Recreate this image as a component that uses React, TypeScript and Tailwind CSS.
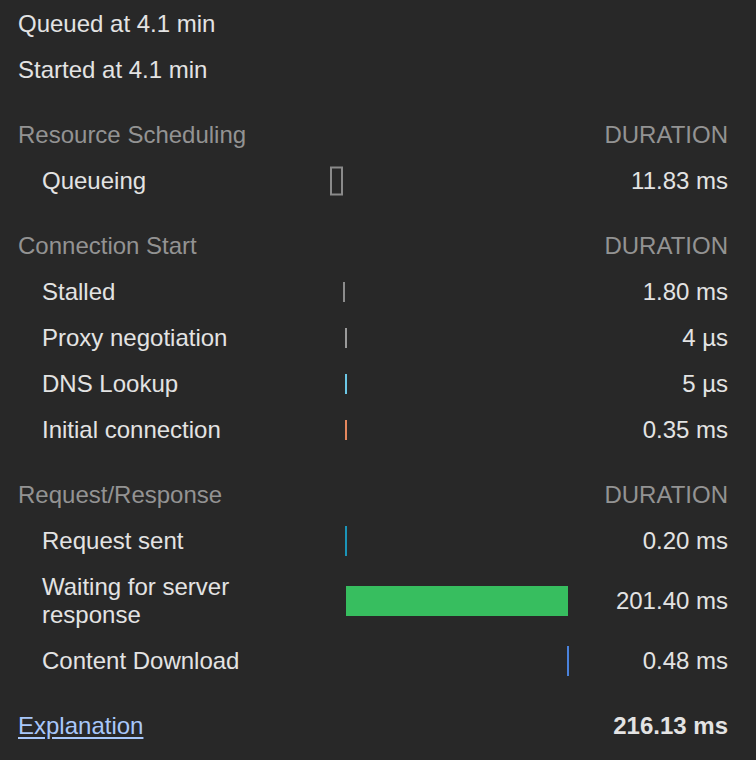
import React from "react";

type Phase = {
    name: string;
    start: number;
    duration: number;
    value: string;
    kind: "box" | "line" | "bar";
    color: string;
    tall?: boolean;
};

type Section = {
    title: string;
    phases: Phase[];
};

// px per ms on the timeline
const SCALE = 1.1;

const sections: Section[] = [
    {
        title: "Resource Scheduling",
        phases: [
            { name: "Queueing", start: 0, duration: 11.83, value: "11.83 ms", kind: "box", color: "border-[#8a8a8a]" },
        ],
    },
    {
        title: "Connection Start",
        phases: [
            { name: "Stalled", start: 11.83, duration: 1.8, value: "1.80 ms", kind: "line", color: "bg-[#8c8c8c]" },
            { name: "Proxy negotiation", start: 13.63, duration: 0.004, value: "4 µs", kind: "line", color: "bg-[#9a9a9a]" },
            { name: "DNS Lookup", start: 13.64, duration: 0.005, value: "5 µs", kind: "line", color: "bg-[#6cc8e6]" },
            { name: "Initial connection", start: 13.64, duration: 0.35, value: "0.35 ms", kind: "line", color: "bg-[#e5875e]" },
        ],
    },
    {
        title: "Request/Response",
        phases: [
            { name: "Request sent", start: 13.99, duration: 0.2, value: "0.20 ms", kind: "line", color: "bg-[#1b94b8]", tall: true },
            { name: "Waiting for server response", start: 14.19, duration: 201.4, value: "201.40 ms", kind: "bar", color: "bg-[#37be5f]", tall: true },
            { name: "Content Download", start: 215.59, duration: 0.48, value: "0.48 ms", kind: "line", color: "bg-[#4a82dc]", tall: true },
        ],
    },
];

const TimelineMark = ({ phase }: { phase: Phase }) => {
    const left = Math.round(phase.start * SCALE);
    const width = Math.max(2, Math.round(phase.duration * SCALE));
    if (phase.kind === "box") {
        return (
            <div
                className={`absolute top-1/2 -translate-y-1/2 h-[29px] border-2 ${phase.color}`}
                style={{ left, width }}
            />
        );
    }
    return (
        <div
            className={`absolute top-1/2 -translate-y-1/2 ${phase.tall ? "h-[30px]" : "h-[20px]"} ${phase.color}`}
            style={{ left, width }}
        />
    );
};

const PhaseRow = ({ phase }: { phase: Phase }) => (
    <div className="flex items-center py-[9px]">
        <div className="w-[312px] pl-6 pr-[50px] shrink-0">{phase.name}</div>
        <div className="relative w-[238px] self-stretch shrink-0">
            <TimelineMark phase={phase} />
        </div>
        <div className="flex-1 text-right">{phase.value}</div>
    </div>
);

export default function App() {
    return (
        <div
            className="min-h-[760px] w-full bg-[#282828] text-[#e3e3e3] text-[24px] leading-[28px] pt-px pl-[18px] pr-[28px]"
            style={{ fontFamily: '"Liberation Sans", Arial, Helvetica, sans-serif' }}
        >
            <div className="py-[9px]">Queued at 4.1 min</div>
            <div className="py-[9px]">Started at 4.1 min</div>

            {sections.map((section) => (
                <div key={section.title}>
                    <div className="mt-[19px] flex justify-between py-[9px] text-[#939393]">
                        <span>{section.title}</span>
                        <span>DURATION</span>
                    </div>
                    {section.phases.map((phase) => (
                        <PhaseRow key={phase.name} phase={phase} />
                    ))}
                </div>
            ))}

            <div className="mt-[19px] flex justify-between py-[9px]">
                <a href="#" className="text-[#a8c7fa] underline underline-offset-[3px]">
                    Explanation
                </a>
                <span className="font-bold">216.13 ms</span>
            </div>
        </div>
    );
}
